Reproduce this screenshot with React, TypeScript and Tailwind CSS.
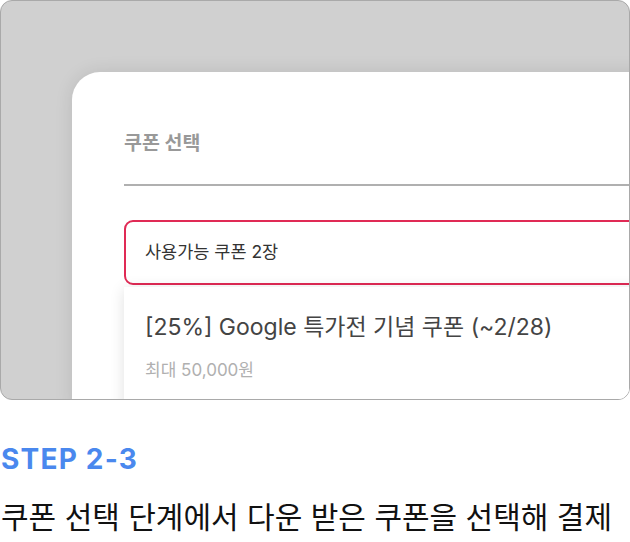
import React from "react";

const font = { fontFamily: '"Inter", "Noto Sans CJK KR", sans-serif' };

const CouponSelectPreview = () => {
  return (
    <div className="w-[630px] h-[400px] rounded-[12px] border border-[#a9a9a9] bg-[#d0d0d0] overflow-hidden pt-[71px] pl-[71px]">
      <div className="w-[640px] h-[340px] bg-white rounded-tl-[28px] shadow-[0_0_18px_rgba(0,0,0,0.10)] pl-[52px] pt-[57px]">
        <h2 className="text-[19.5px] leading-[28px] font-bold text-[#999999]">쿠폰 선택</h2>
        <div className="mt-[27px] h-[2px] bg-[#b0b0b0]" />
        <div className="mt-[34px] h-[65px] w-[560px] border-2 border-[#e02a55] rounded-[9px] flex items-center pl-[19px]">
          <span className="text-[17.5px] text-[#333333]">사용가능 쿠폰 2장</span>
        </div>
        <div className="mt-[2px] h-[140px] bg-white shadow-[0_2px_14px_rgba(0,0,0,0.12)] pl-[21px] pt-[24px]">
          <p className="text-[23px] leading-[32px] text-[#444444]">[25%] Google 특가전 기념 쿠폰 (~2/28)</p>
          <p className="mt-[16px] text-[17px] leading-[22px] text-[#b0b0b0]">최대 50,000원</p>
        </div>
      </div>
    </div>
  );
};

export default function App() {
  return (
    <div className="w-[630px] h-[542px] bg-white" style={font}>
      <CouponSelectPreview />
      <div className="pt-[41px] pl-[1px]">
        <h3 className="text-[28px] leading-[36px] font-bold text-[#4a88ee] tracking-[1.2px]">STEP 2-3</h3>
        <p className="mt-[20px] text-[30px] leading-[40px] text-[#111111]">
          쿠폰 선택 단계에서 다운 받은 쿠폰을 선택해 결제
        </p>
      </div>
    </div>
  );
}
